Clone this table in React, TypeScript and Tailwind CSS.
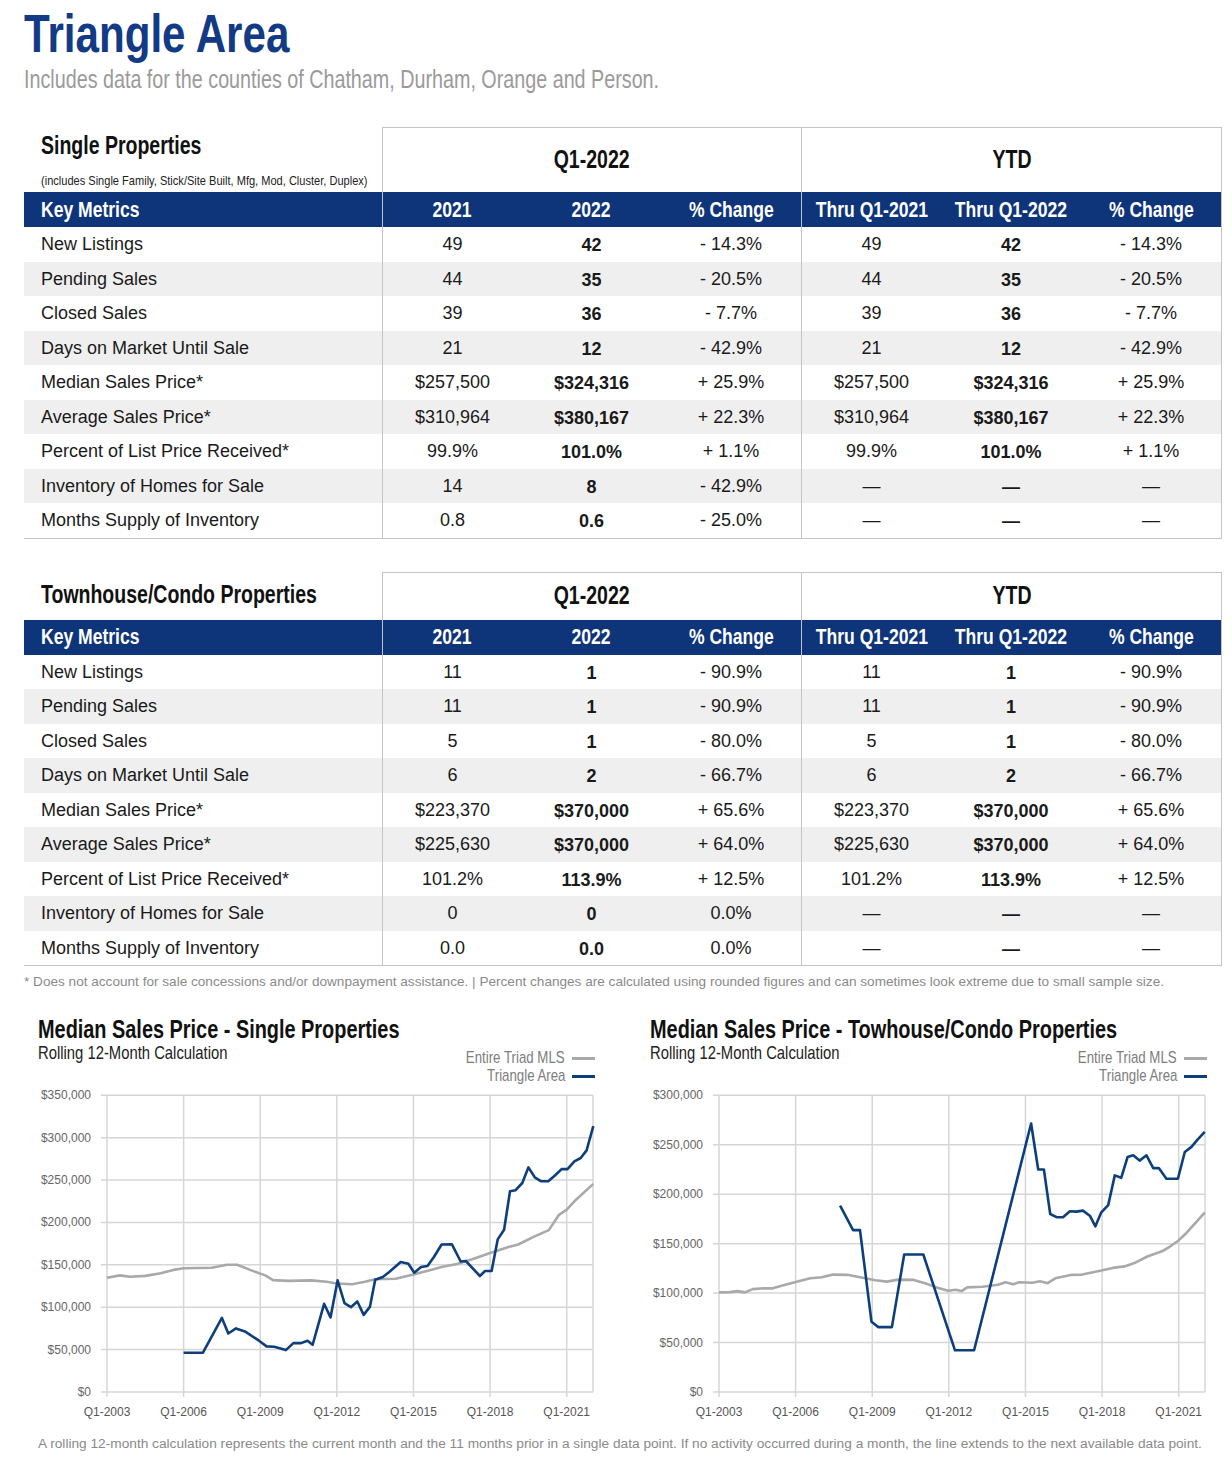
import type { ReactNode } from 'react';

type Row = [string, string, string, string, string, string, string];

const single: Row[] = [
  ['New Listings', '49', '42', '- 14.3%', '49', '42', '- 14.3%'],
  ['Pending Sales', '44', '35', '- 20.5%', '44', '35', '- 20.5%'],
  ['Closed Sales', '39', '36', '- 7.7%', '39', '36', '- 7.7%'],
  ['Days on Market Until Sale', '21', '12', '- 42.9%', '21', '12', '- 42.9%'],
  ['Median Sales Price*', '$257,500', '$324,316', '+ 25.9%', '$257,500', '$324,316', '+ 25.9%'],
  ['Average Sales Price*', '$310,964', '$380,167', '+ 22.3%', '$310,964', '$380,167', '+ 22.3%'],
  ['Percent of List Price Received*', '99.9%', '101.0%', '+ 1.1%', '99.9%', '101.0%', '+ 1.1%'],
  ['Inventory of Homes for Sale', '14', '8', '- 42.9%', '—', '—', '—'],
  ['Months Supply of Inventory', '0.8', '0.6', '- 25.0%', '—', '—', '—'],
];

const condo: Row[] = [
  ['New Listings', '11', '1', '- 90.9%', '11', '1', '- 90.9%'],
  ['Pending Sales', '11', '1', '- 90.9%', '11', '1', '- 90.9%'],
  ['Closed Sales', '5', '1', '- 80.0%', '5', '1', '- 80.0%'],
  ['Days on Market Until Sale', '6', '2', '- 66.7%', '6', '2', '- 66.7%'],
  ['Median Sales Price*', '$223,370', '$370,000', '+ 65.6%', '$223,370', '$370,000', '+ 65.6%'],
  ['Average Sales Price*', '$225,630', '$370,000', '+ 64.0%', '$225,630', '$370,000', '+ 64.0%'],
  ['Percent of List Price Received*', '101.2%', '113.9%', '+ 12.5%', '101.2%', '113.9%', '+ 12.5%'],
  ['Inventory of Homes for Sale', '0', '0', '0.0%', '—', '—', '—'],
  ['Months Supply of Inventory', '0.0', '0.0', '0.0%', '—', '—', '—'],
];

// [year, value in thousands]
const singleMls: [number, number][] = [
  [2003, 134.8], [2003.5, 137.5], [2003.9, 136], [2004.5, 137], [2005.1, 140], [2005.6, 144], [2006, 146],
  [2007.1, 146.6], [2007.7, 150], [2008.1, 150], [2008.6, 144], [2009.2, 137.5], [2009.5, 132], [2010.1, 131],
  [2011, 131.6], [2011.6, 130], [2012, 128], [2012.6, 127], [2013.1, 130], [2013.5, 133], [2014.3, 133.6],
  [2015, 138.7], [2015.6, 143.5], [2016.1, 147.4], [2016.7, 151], [2017.3, 156.5], [2018, 164], [2018.6, 170],
  [2019.1, 174], [2019.7, 183], [2020.3, 191], [2020.7, 209], [2021, 215], [2021.3, 225], [2022.04, 245.5],
];

const singleArea: [number, number][] = [
  [2006, 46.2], [2006.75, 46.2], [2007.5, 87.4], [2007.75, 69], [2008.05, 75], [2008.4, 71.5], [2008.95, 60.5],
  [2009.25, 53.8], [2009.55, 53.4], [2010, 49.4], [2010.3, 57.7], [2010.6, 57.7], [2010.85, 60.5], [2011.05, 55.7],
  [2011.5, 104], [2011.75, 88], [2012.03, 131.6], [2012.3, 104.7], [2012.55, 100], [2012.8, 106.7], [2013.05, 91],
  [2013.3, 100.8], [2013.5, 132.4], [2013.8, 135.6], [2014.05, 141.5], [2014.5, 153.4], [2014.8, 151.4],
  [2015.03, 140.7], [2015.3, 147.4], [2015.55, 148.6], [2015.8, 159.3], [2016.1, 174], [2016.5, 174.3],
  [2016.85, 154], [2017.05, 154.5], [2017.6, 136.8], [2017.8, 142.7], [2018.06, 142.7], [2018.3, 180],
  [2018.55, 191.3], [2018.78, 236.7], [2019, 238], [2019.26, 246.6], [2019.5, 265], [2019.75, 253.3],
  [2020, 248.6], [2020.28, 248.6], [2020.55, 255.7], [2020.8, 263], [2021.03, 263], [2021.3, 272],
  [2021.55, 276], [2021.78, 285], [2022.04, 313.7],
];

const condoMls: [number, number][] = [
  [2003, 100.7], [2003.42, 101], [2003.72, 102], [2004.02, 100.7], [2004.32, 104], [2004.77, 105], [2005.07, 104.8],
  [2005.52, 108], [2005.97, 111], [2006.57, 115], [2007.02, 116], [2007.47, 118.7], [2008.07, 118.4], [2008.52, 116],
  [2009.12, 113], [2009.57, 111.6], [2010.02, 113.6], [2010.62, 113.3], [2011.07, 110], [2011.52, 105.8],
  [2011.97, 102.4], [2012.27, 103.4], [2012.5, 102], [2012.72, 105.8], [2013.32, 106.5], [2013.92, 108.5],
  [2014.22, 111], [2014.52, 109], [2014.75, 111], [2015.27, 110.5], [2015.57, 112], [2015.87, 110], [2016.17, 115],
  [2016.77, 118.4], [2017.22, 118.7], [2017.97, 122.8], [2018.42, 125.5], [2018.87, 127], [2019.32, 131],
  [2019.77, 137], [2020.37, 142.5], [2020.67, 147.3], [2020.97, 152.7], [2021.27, 160], [2022.02, 181.4],
];

const condoArea: [number, number][] = [
  [2007.74, 188.5], [2008.25, 163.7], [2008.52, 163.7], [2008.97, 71], [2009.24, 65.6], [2009.77, 65.6],
  [2010.25, 139], [2011, 139], [2012.24, 42.2], [2012.99, 42.2], [2015.22, 271.5], [2015.5, 225], [2015.72, 225],
  [2015.97, 180], [2016.24, 176.6], [2016.47, 176.6], [2016.74, 182.7], [2016.99, 182.4], [2017.25, 183.4],
  [2017.52, 178.3], [2017.74, 167.5], [2017.97, 181.7], [2018.24, 189], [2018.5, 219], [2018.75, 216.6],
  [2019, 237.6], [2019.22, 239.3], [2019.47, 234], [2019.74, 239.3], [2020, 226.4], [2020.22, 226.4],
  [2020.52, 215.6], [2020.97, 215.6], [2021.24, 242.7], [2021.5, 247.8], [2021.72, 254.6], [2022.02, 263],
];

// condensed face: no narrow font installed, so squeeze Liberation Sans horizontally
function Cn({ children, className = 'origin-left' }: { children: ReactNode; className?: string }) {
  return <span className={`inline-block scale-x-[0.78] whitespace-nowrap ${className}`}>{children}</span>;
}

function MetricsTable({ title, note, rows, headCls }: { title: string; note?: string; rows: Row[]; headCls: string }) {
  return (
    <div className="ml-[24px] w-[1198px] border-b border-[#c4c4c4]">
      <div className={`flex ${headCls}`}>
        <div className="flex w-[358px] flex-col pl-[17px]">
          <div className={`text-[25px] font-bold leading-none text-[#111] ${note ? 'mt-[6px]' : 'mt-[10px]'}`}>
            <Cn>{title}</Cn>
          </div>
          {note ? (
            <div className="mt-auto pb-[5px] text-[13px] leading-none text-[#222]">
              <span className="inline-block origin-left scale-x-[0.85] whitespace-nowrap">{note}</span>
            </div>
          ) : null}
        </div>
        <div className="flex w-[419px] items-center justify-center border-l border-t border-[#c4c4c4] pb-[1px] text-[25px] font-bold text-[#111]">
          <Cn className="origin-center">Q1-2022</Cn>
        </div>
        <div className="flex w-[421px] items-center justify-center border-l border-r border-t border-[#c4c4c4] pb-[1px] text-[25px] font-bold text-[#111]">
          <Cn className="origin-center">YTD</Cn>
        </div>
      </div>
      <div className="flex h-[35px] items-center bg-[#0e3479] text-[22.5px] font-bold text-white">
        <div className="flex h-full w-[358px] items-center pl-[17px]">
          <Cn>Key Metrics</Cn>
        </div>
        <div className="flex h-full w-[140px] items-center justify-center border-l border-[#b9c0cf]">
          <Cn className="origin-center">2021</Cn>
        </div>
        <div className="flex h-full w-[139px] items-center justify-center">
          <Cn className="origin-center">2022</Cn>
        </div>
        <div className="flex h-full w-[140px] items-center justify-center">
          <Cn className="origin-center">% Change</Cn>
        </div>
        <div className="flex h-full w-[140px] items-center justify-center border-l border-[#b9c0cf]">
          <Cn className="origin-center">Thru Q1-2021</Cn>
        </div>
        <div className="flex h-full w-[140px] items-center justify-center">
          <Cn className="origin-center">Thru Q1-2022</Cn>
        </div>
        <div className="flex h-full w-[141px] items-center justify-center border-r border-[#c4c4c4]">
          <Cn className="origin-center">% Change</Cn>
        </div>
      </div>
      {rows.map((r, i) => (
        <div key={r[0]} className={`flex h-[34.5px] text-[18px] text-[#1a1a1a] ${i % 2 === 1 ? 'bg-[#efefef]' : 'bg-white'}`}>
          <div className="flex w-[358px] items-center pl-[17px]">{r[0]}</div>
          <div className="flex w-[140px] items-center justify-center border-l border-[#c4c4c4]">{r[1]}</div>
          <div className="flex w-[139px] items-center justify-center pt-[2px] font-bold">{r[2]}</div>
          <div className="flex w-[140px] items-center justify-center">{r[3]}</div>
          <div className="flex w-[140px] items-center justify-center border-l border-[#c4c4c4]">{r[4]}</div>
          <div className="flex w-[140px] items-center justify-center pt-[2px] font-bold">{r[5]}</div>
          <div className="flex w-[141px] items-center justify-center border-r border-[#c4c4c4]">{r[6]}</div>
        </div>
      ))}
    </div>
  );
}

function Chart({ title, max, mls, area }: { title: string; max: number; mls: [number, number][]; area: [number, number][] }) {
  const X0 = 69;
  const X1 = 555;
  const Y0 = 306;
  const Y1 = 9.3;
  const x = (t: number) => X0 + ((t - 2003) * (X1 - X0)) / 19.03;
  const y = (v: number) => Y0 - (v / max) * (Y0 - Y1);
  const pts = (d: [number, number][]) => d.map(([t, v]) => `${x(t).toFixed(1)},${y(v).toFixed(1)}`).join(' ');
  const yTicks: number[] = [];
  for (let v = 0; v <= max; v += 50) yTicks.push(v);
  const years = [2003, 2006, 2009, 2012, 2015, 2018, 2021];
  const font = "'Liberation Sans', Arial, sans-serif";

  return (
    <div className="w-[557px]">
      <div className="h-[25px] text-[25.5px] font-bold leading-[25px] text-[#111]">
        <Cn>{title}</Cn>
      </div>
      <div className="mt-[2px] flex items-start justify-between">
        <div className="text-[19px] leading-[18px] text-[#222]">
          <Cn>Rolling 12-Month Calculation</Cn>
        </div>
        <div className="mt-[5px] flex flex-col items-end text-[17px] leading-[18px] text-[#7d7d7d]">
          <div className="flex items-center gap-[7px]">
            <Cn className="origin-right">Entire Triad MLS</Cn>
            <span className="h-[3px] w-[23px] bg-[#a9a9a9]" />
          </div>
          <div className="flex items-center gap-[7px]">
            <Cn className="origin-right">Triangle Area</Cn>
            <span className="h-[3px] w-[23px] bg-[#0d3f7d]" />
          </div>
        </div>
      </div>
      <svg width="560" height="335" className="mt-[1px] block">
        {yTicks.map((v) => (
          <g key={v}>
            <line x1={X0 - 6} x2={X1} y1={y(v)} y2={y(v)} stroke="#d6d6d6" strokeWidth="1.5" />
            <text x={53} y={y(v) + 4} textAnchor="end" fontSize="12" fill="#666" fontFamily={font}>
              ${v === 0 ? '0' : `${v},000`}
            </text>
          </g>
        ))}
        {years.map((t) => (
          <g key={t}>
            <line x1={x(t)} x2={x(t)} y1={Y1} y2={Y0 + 5} stroke="#d6d6d6" strokeWidth="1.5" />
            <text x={x(t)} y={330} textAnchor="middle" fontSize="12" fill="#555" fontFamily={font}>
              Q1-{t}
            </text>
          </g>
        ))}
        <line x1={X1} x2={X1} y1={Y1} y2={Y0} stroke="#d6d6d6" strokeWidth="1.5" />
        <polyline points={pts(mls)} fill="none" stroke="#a9a9a9" strokeWidth="2.6" strokeLinejoin="round" />
        <polyline points={pts(area)} fill="none" stroke="#0d3f7d" strokeWidth="2.6" strokeLinejoin="round" />
      </svg>
    </div>
  );
}

export default function App() {
  return (
    <div className="h-[1458px] w-[1232px] overflow-hidden bg-white font-['Liberation_Sans',Arial,sans-serif]">
      <div className="pl-[24px] pt-[6px]">
        <h1 className="text-[54px] font-bold leading-none text-[#123a85]">
          <Cn>Triangle Area</Cn>
        </h1>
        <p className="mt-[7px] text-[25.3px] leading-none text-[#9a9a9a]">
          <Cn>Includes data for the counties of Chatham, Durham, Orange and Person.</Cn>
        </p>
      </div>

      <div className="mt-[35px]">
        <MetricsTable
          title="Single Properties"
          note="(includes Single Family, Stick/Site Built, Mfg, Mod, Cluster, Duplex)"
          rows={single}
          headCls="h-[65px]"
        />
      </div>

      <div className="mt-[33px]">
        <MetricsTable title="Townhouse/Condo Properties" rows={condo} headCls="h-[48px]" />
      </div>

      <p className="ml-[24px] mt-[8px] text-[13.6px] leading-[16px] text-[#8a8a8a]">
        * Does not account for sale concessions and/or downpayment assistance. | Percent changes are calculated using rounded figures and can sometimes look extreme due to small sample size.
      </p>

      <div className="mt-[27px] flex">
        <div className="w-[612px] pl-[38px]">
          <Chart title="Median Sales Price - Single Properties" max={350} mls={singleMls} area={singleArea} />
        </div>
        <div className="w-[620px] pl-[38px]">
          <Chart title="Median Sales Price - Towhouse/Condo Properties" max={300} mls={condoMls} area={condoArea} />
        </div>
      </div>

      <p className="ml-[38px] mt-[15px] whitespace-nowrap text-[13.7px] leading-[16px] text-[#8a8a8a]">
        A rolling 12-month calculation represents the current month and the 11 months prior in a single data point. If no activity occurred during a month, the line extends to the next available data point.
      </p>
    </div>
  );
}
